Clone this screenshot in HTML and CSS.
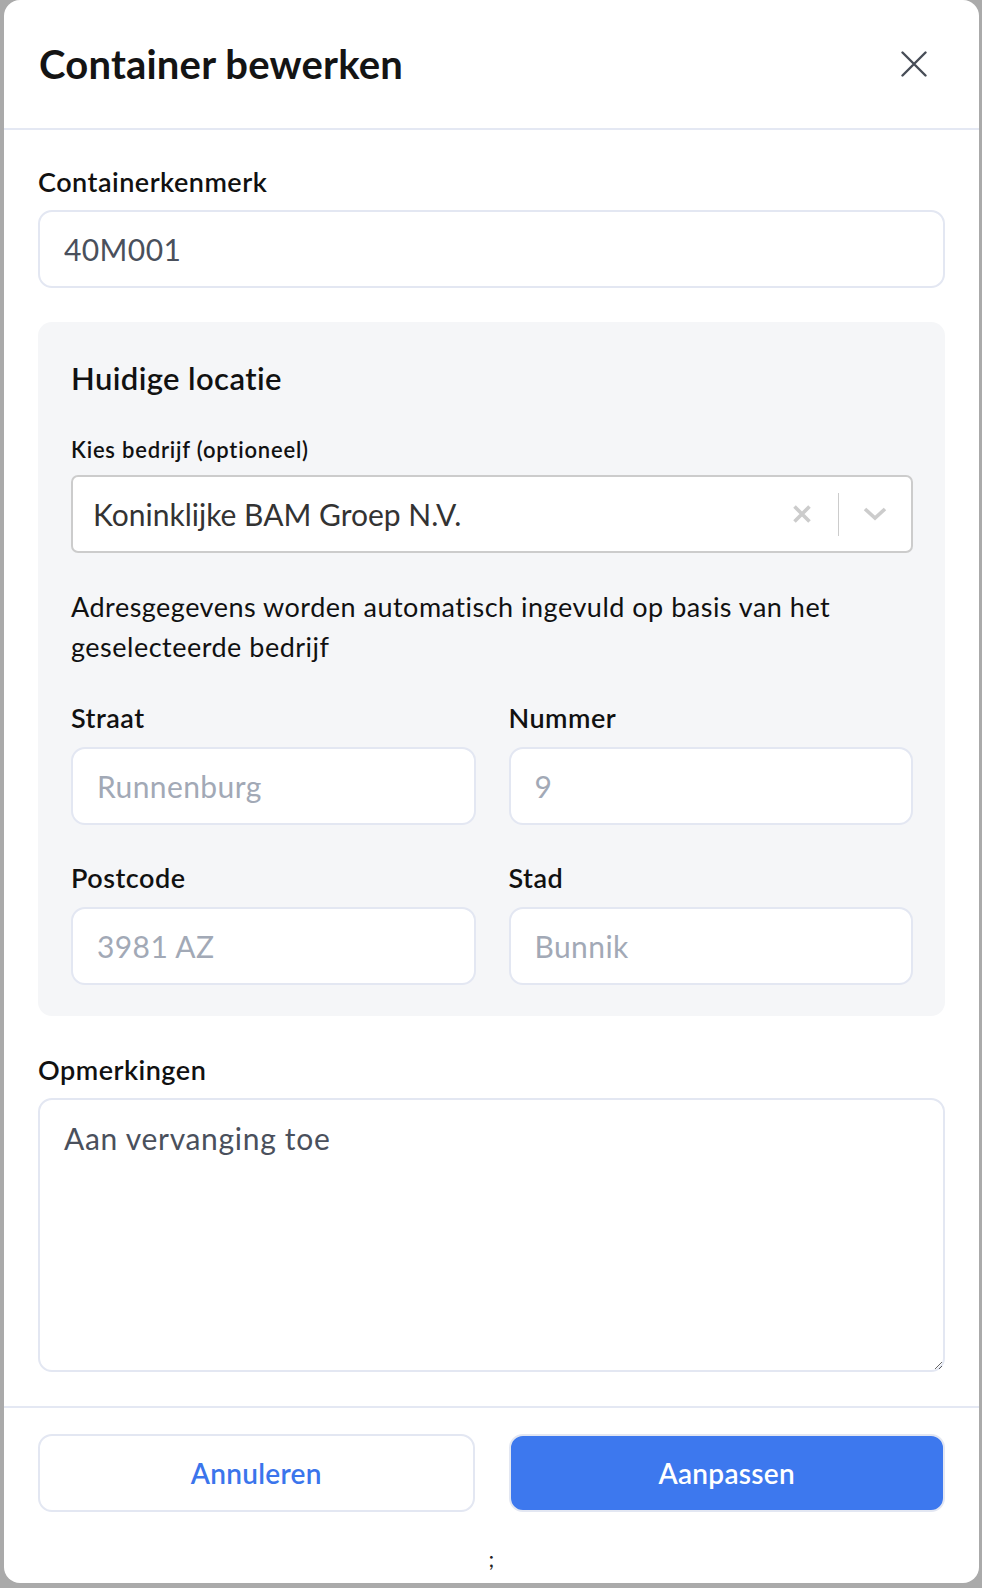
FILE: index.html
```html
<!DOCTYPE html>
<html lang="nl">
<head>
<meta charset="utf-8">
<title>Container bewerken</title>
<link rel="stylesheet" href="styles.css">
</head>
<body>
<div class="modal">
  <header class="modal-header">
    <h1 class="modal-title">Container bewerken</h1>
    <button class="close-btn" aria-label="Sluiten">
      <svg width="26" height="26" viewBox="0 0 26 26"><path d="M1.5 1.5 L24.5 24.5 M24.5 1.5 L1.5 24.5" stroke="#474d57" stroke-width="2.4" stroke-linecap="round" fill="none"/></svg>
    </button>
  </header>
  <div class="modal-body">
    <label class="label">Containerkenmerk</label>
    <input class="field" type="text" value="40M001">

    <section class="location">
      <h2 class="location-title">Huidige locatie</h2>
      <label class="label small">Kies bedrijf (optioneel)</label>
      <div class="select">
        <span class="select-value">Koninklijke BAM Groep N.V.</span>
        <span class="select-clear">
          <svg width="20" height="20" viewBox="0 0 20 20"><path d="M2.5 2.5 L17.5 17.5 M17.5 2.5 L2.5 17.5" stroke="#cccccc" stroke-width="3.6" fill="none"/></svg>
        </span>
        <span class="select-sep"></span>
        <span class="select-arrow">
          <svg width="24" height="14" viewBox="0 0 24 14"><path d="M2 2 L12 11 L22 2" stroke="#cccccc" stroke-width="3.6" fill="none" stroke-linejoin="miter"/></svg>
        </span>
      </div>
      <p class="helper">Adresgegevens worden automatisch ingevuld op basis van het geselecteerde bedrijf</p>
      <div class="grid">
        <div class="group">
          <label class="label">Straat</label>
          <input class="field" type="text" placeholder="Runnenburg">
        </div>
        <div class="group">
          <label class="label">Nummer</label>
          <input class="field" type="text" placeholder="9">
        </div>
        <div class="group">
          <label class="label">Postcode</label>
          <input class="field" type="text" placeholder="3981 AZ">
        </div>
        <div class="group">
          <label class="label">Stad</label>
          <input class="field" type="text" placeholder="Bunnik">
        </div>
      </div>
    </section>

    <label class="label remarks-label">Opmerkingen</label>
    <textarea class="field textarea">Aan vervanging toe</textarea>
  </div>
  <footer class="modal-footer">
    <button class="btn btn-secondary">Annuleren</button>
    <button class="btn btn-primary">Aanpassen</button>
  </footer>
  <div class="stray">;</div>
</div>
</body>
</html>
```

FILE: styles.css
```css
* { box-sizing: border-box; }

html, body {
  margin: 0;
  padding: 0;
}

body {
  background: #aaaaaa;
  font-family: "Lato", "Liberation Sans", sans-serif;
  color: #111111;
  width: 982px;
  height: 1588px;
  overflow: hidden;
}

.modal {
  margin-left: 4px;
  width: 975px;
  height: 1583px;
  background: #ffffff;
  border-radius: 16px;
  overflow: hidden;
  display: flex;
  flex-direction: column;
}

.modal-header {
  height: 130px;
  padding: 0 52px 0 35px;
  display: flex;
  align-items: center;
  justify-content: space-between;
  border-bottom: 2px solid #e4e8f3;
  flex-shrink: 0;
}

.modal-title {
  margin: 0;
  font-size: 40px;
  font-weight: 700;
  color: #141414;
  letter-spacing: 0.2px;
}

.close-btn {
  background: none;
  border: none;
  padding: 0;
  width: 26px;
  height: 26px;
  display: flex;
  align-items: center;
  justify-content: center;
  cursor: pointer;
}

.modal-body {
  padding: 36px 34px 34px 34px;
  display: flex;
  flex-direction: column;
}

.label {
  display: block;
  font-size: 27px;
  font-weight: 600;
  letter-spacing: 0.5px;
  line-height: 32px;
  color: #111111;
  margin-bottom: 12px;
}

.label.small {
  font-size: 22px;
  letter-spacing: 0.8px;
  line-height: 28px;
  margin-top: 40px;
  margin-bottom: 11px;
}

.field {
  display: block;
  width: 100%;
  height: 78px;
  border: 2px solid #e3e7f2;
  border-radius: 14px;
  background: #ffffff;
  padding: 0 24px;
  font-family: "Lato", "Liberation Sans", sans-serif;
  font-size: 30px;
  letter-spacing: 0.4px;
  color: #4a505c;
  outline: none;
}

.field::placeholder {
  color: #a2a9b6;
  opacity: 1;
}

.location {
  margin-top: 34px;
  background: #f5f6f8;
  border-radius: 14px;
  padding: 38px 32px 31px 33px;
}

.location-title {
  margin: 0;
  font-size: 31px;
  font-weight: 600;
  letter-spacing: 0.4px;
  line-height: 36px;
  color: #111111;
}

.select {
  display: flex;
  align-items: center;
  height: 78px;
  background: #ffffff;
  border: 2px solid #cccccc;
  border-radius: 7px;
  padding-left: 20px;
}

.select-value {
  flex: 1;
  font-size: 30px;
  color: #333333;
}

.select-clear {
  display: flex;
  align-items: center;
  justify-content: center;
  width: 20px;
  margin-right: 26px;
}

.select-sep {
  width: 1.5px;
  height: 43px;
  background: #cccccc;
}

.select-arrow {
  display: flex;
  align-items: center;
  justify-content: center;
  width: 24px;
  margin: 0 24px 0 24px;
}

.helper {
  margin: 34px 0 0 0;
  font-size: 27px;
  letter-spacing: 0.5px;
  line-height: 40px;
  color: #111111;
}

.grid {
  margin-top: 35px;
  display: grid;
  grid-template-columns: 1fr 1fr;
  column-gap: 33px;
  row-gap: 37px;
}

.group .label {
  margin-bottom: 13px;
}

.remarks-label {
  margin-top: 38px;
}

.textarea {
  height: 274px;
  padding: 20px 24px;
  resize: vertical;
  line-height: 36px;
  letter-spacing: 0.7px;
}

.modal-footer {
  border-top: 2px solid #e4e8f3;
  padding: 26px 34px 0 34px;
  display: flex;
  gap: 34px;
}

.btn {
  flex: 1;
  height: 78px;
  border-radius: 14px;
  font-family: "Lato", "Liberation Sans", sans-serif;
  font-size: 28px;
  font-weight: 600;
  letter-spacing: 0.3px;
  cursor: pointer;
}

.btn-secondary {
  background: #ffffff;
  border: 2px solid #e3e7f2;
  color: #3b75ec;
}

.btn-primary {
  background: #3d78ee;
  border: 2px solid #e3e7f2;
  color: #ffffff;
}

.stray {
  text-align: center;
  margin-top: 32px;
  font-size: 22px;
  line-height: 30px;
  color: #222222;
}
```
